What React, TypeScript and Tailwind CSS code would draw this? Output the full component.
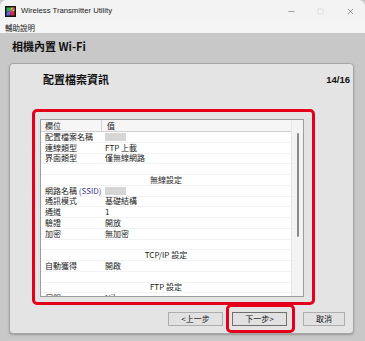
import { Minus, Square, X } from 'lucide-react'

const CJK = "font-['Noto_Sans_CJK_TC','Noto_Sans',sans-serif]"

type Row =
  | { kind: 'item'; k: string; v?: string; blur?: boolean; ssid?: boolean }
  | { kind: 'section'; label: string }
  | { kind: 'blank' }

const rows: Row[] = [
  { kind: 'item', k: '配置檔案名稱', blur: true },
  { kind: 'item', k: '連線類型', v: 'FTP 上載' },
  { kind: 'item', k: '界面類型', v: '僅無線網路' },
  { kind: 'blank' },
  { kind: 'section', label: '無線設定' },
  { kind: 'item', k: '網路名稱', ssid: true, blur: true },
  { kind: 'item', k: '通訊模式', v: '基礎結構' },
  { kind: 'item', k: '通道', v: '1' },
  { kind: 'item', k: '驗證', v: '開放' },
  { kind: 'item', k: '加密', v: '無加密' },
  { kind: 'blank' },
  { kind: 'section', label: 'TCP/IP 設定' },
  { kind: 'item', k: '自動獲得', v: '開啟' },
  { kind: 'blank' },
  { kind: 'section', label: 'FTP 設定' },
  { kind: 'item', k: '伺服', v: 'Nikon' },
]

function AppIcon() {
  return (
    <svg width="11" height="11" viewBox="0 0 11 11">
      <rect x="0" y="0" width="11" height="11" fill="#111" />
      <rect x="1.5" y="1.5" width="4" height="4" fill="#2bb24c" />
      <rect x="5.5" y="1.5" width="4" height="4" fill="#f2c21b" />
      <rect x="1.5" y="5.5" width="4" height="4" fill="#3a6fd8" />
      <rect x="5.5" y="5.5" width="4" height="4" fill="#d8303a" />
      <path d="M2 9 L9 2" stroke="#b04ad0" strokeWidth="1.4" />
    </svg>
  )
}

function ListRow({ row }: { row: Row }) {
  const base = 'h-[10.75px] shrink-0 border-b border-[#f2f2f2] flex items-center leading-none'
  if (row.kind === 'blank') return <div className={base} />
  if (row.kind === 'section') return <div className={`${base} justify-center`}>{row.label}</div>
  return (
    <div className={base}>
      <div className="w-[61px] pl-[4px] whitespace-nowrap">
        {row.k}
        {row.ssid && <span className="text-[#3c3c86]"> (SSID)</span>}
      </div>
      <div className="pl-[3px] flex items-center whitespace-nowrap">
        {row.blur ? <div className="w-[21px] h-[8px] bg-[#d6d6d6] blur-[0.6px]" /> : row.v}
      </div>
    </div>
  )
}

export default function App() {
  return (
    <div className="w-[365px] h-[341px] bg-[#c8c8c8] flex flex-col overflow-hidden">
      {/* title bar */}
      <div className="h-[22px] shrink-0 bg-[#f3f3f3] flex items-center pl-[5px] rounded-t-[6px]">
        <AppIcon />
        <span className="ml-[5px] text-[7.7px] text-[#1a1a1a] font-['Liberation_Sans',sans-serif]">
          Wireless Transmitter Utility
        </span>
        <div className="ml-auto flex items-center">
          <div className="w-[29px] flex justify-center"><Minus size={9} strokeWidth={1.2} className="text-[#333]" /></div>
          <div className="w-[29px] flex justify-center"><Square size={7} strokeWidth={1.2} className="text-[#c4c4c4]" /></div>
          <div className="w-[30px] flex justify-center"><X size={9} strokeWidth={1.3} className="text-[#333]" /></div>
        </div>
      </div>

      {/* menu */}
      <div className={`h-[11px] shrink-0 bg-[#f5f5f5] flex items-center pl-[5px] text-[7.5px] leading-none text-[#222] ${CJK}`}>
        輔助說明
      </div>

      {/* heading */}
      <div className={`h-[30px] shrink-0 flex items-center pl-[12px] pb-[3px] text-[11px] font-bold text-[#111] ${CJK}`}>
        相機內置 Wi-Fi
      </div>

      {/* panel */}
      <div className="ml-[9px] mr-[11px] h-[271px] shrink-0 rounded-[4px] border border-[#a6a6a6] bg-[#e4e4e4] shadow-[0_1px_2px_rgba(0,0,0,0.25)] flex flex-col">
        <div className="h-[45px] shrink-0 flex items-start justify-between pt-[10px] pl-[33px] pr-[3px]">
          <span className={`text-[11px] font-bold leading-none text-[#111] ${CJK}`}>配置檔案資訊</span>
          <span className="text-[9.5px] font-bold leading-none text-[#111] font-['Liberation_Sans',sans-serif] pt-[1px]">14/16</span>
        </div>

        {/* highlighted list */}
        <div className="ml-[22px] w-[283px] h-[196px] shrink-0 border-[3px] border-[#e4001a] rounded-[5px] pt-[7px] pl-[5px] pr-[8px] pb-[5px]">
          <div className={`h-full border border-[#9c9c9c] bg-white flex overflow-hidden text-[8px] text-[#1a1a1a] ${CJK}`}>
            <div className="flex-1 flex flex-col overflow-hidden">
              <div className="h-[12px] shrink-0 bg-[#f6f6f6] border-b border-[#cfcfcf] flex items-center leading-none">
                <div className="w-[61px] pl-[4px] h-full flex items-center border-r border-[#d4d4d4]">欄位</div>
                <div className="pl-[5px]">值</div>
              </div>
              {rows.map((r, i) => (
                <ListRow key={i} row={r} />
              ))}
            </div>
            <div className="w-[12px] shrink-0 bg-[#f3f3f3] border-l border-[#e6e6e6] flex flex-col items-center">
              <div className="mt-[13px] ml-[1px] w-[2px] h-[104px] rounded-full bg-[#8a8a8a]" />
            </div>
          </div>
        </div>

        {/* buttons */}
        <div className={`mt-[7px] h-[14px] shrink-0 flex justify-end pr-[8px] text-[8px] leading-none text-[#111] ${CJK}`}>
          <button className="w-[55px] h-[14px] bg-[#e1e1e1] border border-[#adadad] flex items-center justify-center">&lt;上一步</button>
          <div className="relative ml-[9px]">
            <div className="absolute -left-[6px] -right-[8px] -top-[8px] -bottom-[7px] border-[3px] border-[#e4001a] rounded-[5px]" />
            <button className="w-[55px] h-[14px] bg-[#e1e1e1] border border-[#6f6f6f] flex items-center justify-center">下一步&gt;</button>
          </div>
          <button className="ml-[16px] w-[42px] h-[14px] bg-[#e1e1e1] border border-[#adadad] flex items-center justify-center">取消</button>
        </div>
      </div>
    </div>
  )
}
